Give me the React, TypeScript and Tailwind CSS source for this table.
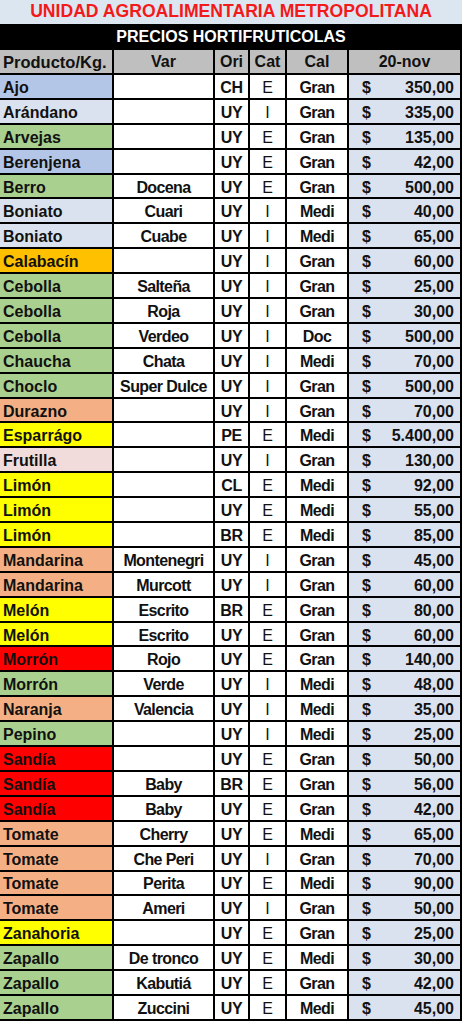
import React from "react";

type Row = [string, string, string, string, string, string, string];

const C = {
  blue: "bg-[#b4c6e7]",
  light: "bg-[#dbe2ef]",
  green: "bg-[#a9d08e]",
  orange: "bg-[#ffc000]",
  salmon: "bg-[#f4b084]",
  pink: "bg-[#f2dcdb]",
  yellow: "bg-[#ffff00]",
  red: "bg-[#ff0000]",
};

const rows: Row[] = [
  ["Ajo", C.blue, "", "CH", "E", "Gran", "350,00"],
  ["Arándano", C.light, "", "UY", "I", "Gran", "335,00"],
  ["Arvejas", C.green, "", "UY", "E", "Gran", "135,00"],
  ["Berenjena", C.blue, "", "UY", "E", "Gran", "42,00"],
  ["Berro", C.green, "Docena", "UY", "E", "Gran", "500,00"],
  ["Boniato", C.light, "Cuari", "UY", "I", "Medi", "40,00"],
  ["Boniato", C.light, "Cuabe", "UY", "I", "Medi", "65,00"],
  ["Calabacín", C.orange, "", "UY", "I", "Gran", "60,00"],
  ["Cebolla", C.green, "Salteña", "UY", "I", "Gran", "25,00"],
  ["Cebolla", C.green, "Roja", "UY", "I", "Gran", "30,00"],
  ["Cebolla", C.green, "Verdeo", "UY", "I", "Doc", "500,00"],
  ["Chaucha", C.green, "Chata", "UY", "I", "Medi", "70,00"],
  ["Choclo", C.green, "Super Dulce", "UY", "I", "Gran", "500,00"],
  ["Durazno", C.salmon, "", "UY", "I", "Gran", "70,00"],
  ["Esparrágo", C.yellow, "", "PE", "E", "Medi", "5.400,00"],
  ["Frutilla", C.pink, "", "UY", "I", "Gran", "130,00"],
  ["Limón", C.yellow, "", "CL", "E", "Medi", "92,00"],
  ["Limón", C.yellow, "", "UY", "E", "Medi", "55,00"],
  ["Limón", C.yellow, "", "BR", "E", "Medi", "85,00"],
  ["Mandarina", C.salmon, "Montenegri", "UY", "I", "Gran", "45,00"],
  ["Mandarina", C.salmon, "Murcott", "UY", "I", "Gran", "60,00"],
  ["Melón", C.yellow, "Escrito", "BR", "E", "Gran", "80,00"],
  ["Melón", C.yellow, "Escrito", "UY", "E", "Gran", "60,00"],
  ["Morrón", C.red, "Rojo", "UY", "E", "Gran", "140,00"],
  ["Morrón", C.green, "Verde", "UY", "I", "Medi", "48,00"],
  ["Naranja", C.salmon, "Valencia", "UY", "I", "Medi", "35,00"],
  ["Pepino", C.green, "", "UY", "I", "Medi", "25,00"],
  ["Sandía", C.red, "", "UY", "E", "Gran", "50,00"],
  ["Sandía", C.red, "Baby", "BR", "E", "Gran", "56,00"],
  ["Sandía", C.red, "Baby", "UY", "E", "Gran", "42,00"],
  ["Tomate", C.salmon, "Cherry", "UY", "E", "Medi", "65,00"],
  ["Tomate", C.salmon, "Che Peri", "UY", "I", "Gran", "70,00"],
  ["Tomate", C.salmon, "Perita", "UY", "E", "Medi", "90,00"],
  ["Tomate", C.salmon, "Ameri", "UY", "I", "Gran", "50,00"],
  ["Zanahoria", C.yellow, "", "UY", "E", "Gran", "25,00"],
  ["Zapallo", C.green, "De tronco", "UY", "E", "Medi", "30,00"],
  ["Zapallo", C.green, "Kabutiá", "UY", "E", "Gran", "42,00"],
  ["Zapallo", C.green, "Zuccini", "UY", "E", "Medi", "45,00"],
];

const cell = "flex items-center h-[22.9px] pt-[3px] overflow-hidden whitespace-nowrap";
const head = "flex items-center h-[23px] pt-[1px] bg-[#bfbfbf] overflow-hidden whitespace-nowrap";

export default function App() {
  return (
    <div
      className="w-[465px] min-h-[1024px] bg-white text-[#111] text-[16px] leading-none font-bold"
      style={{ fontFamily: '"Liberation Sans", Arial, sans-serif' }}
    >
      <div className="w-[462px]">
        <div className="h-[24px] bg-[#dce6f1] flex items-center justify-center text-[#f21a1a] text-[17.6px] font-bold">
          UNIDAD AGROALIMENTARIA METROPOLITANA
        </div>
        <div className="h-[26px] bg-black flex items-center justify-center text-white text-[16px] font-bold">
          PRECIOS HORTIFRUTICOLAS
        </div>
        <div className="grid grid-cols-[112px_99px_33px_35px_60px_111px] gap-[2px] pr-[2px] pb-[2px] bg-black">
          <div className={`${head} pl-[3px] text-[16.5px]`}>Producto/Kg.</div>
          <div className={`${head} justify-center`}>Var</div>
          <div className={`${head} justify-center`}>Ori</div>
          <div className={`${head} justify-center`}>Cat</div>
          <div className={`${head} justify-center`}>Cal</div>
          <div className={`${head} justify-center`}>20-nov</div>
          {rows.map((r, i) => (
            <React.Fragment key={i}>
              <div className={`${cell} ${r[1]} pl-[3px]`}>{r[0]}</div>
              <div className={`${cell} bg-white justify-center tracking-[-0.6px]`}>{r[2]}</div>
              <div className={`${cell} bg-white justify-center tracking-[-0.3px]`}>{r[3]}</div>
              <div className={`${cell} bg-white justify-center font-normal`}>{r[4]}</div>
              <div className={`${cell} bg-white justify-center tracking-[-0.6px]`}>{r[5]}</div>
              <div className={`${cell} bg-[#dbe2ef] justify-between pl-[13px] pr-[6px]`}>
                <span>$</span>
                <span>{r[6]}</span>
              </div>
            </React.Fragment>
          ))}
        </div>
      </div>
    </div>
  );
}
